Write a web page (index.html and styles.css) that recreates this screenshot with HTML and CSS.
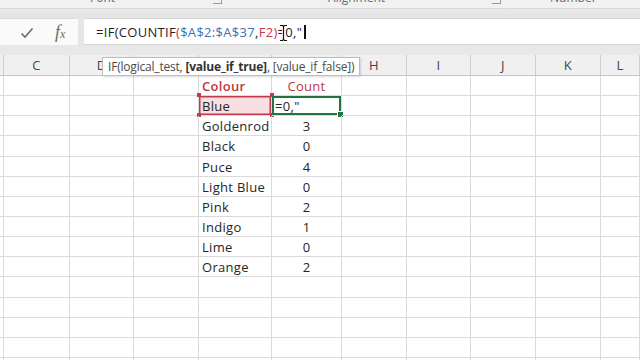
FILE: index.html
```html
<!DOCTYPE html>
<html lang="en">
  <head>
    <meta charset="UTF-8" />
    <title>Colour counts</title>
    <link rel="stylesheet" href="styles.css">
  </head>
  <body>
    <!-- bottom edge of the ribbon, group labels cut off -->
    <div class="ribbon">
      <span class="group-label label-font">Font</span>
      <span class="launcher launcher-font"></span>
      <span class="group-label label-align">Alignment</span>
      <span class="launcher launcher-align"></span>
      <span class="group-label label-number">Number</span>
    </div>
    <div class="band"></div>

    <div class="formula-row">
      <div class="formula-tools">
        <svg class="tick" width="14" height="12" viewBox="0 0 14 12">
          <polyline points="1.5,6.5 5,10 12.5,1.5" fill="none" stroke="#6b6b6b" stroke-width="1.6" />
        </svg>
        <span class="fx">f<small>x</small></span>
      </div>
      <div class="formula-input">
        <span>=IF(COUNTIF</span><span class="ref-red">(</span><span class="ref-blue">$A$2:$A$37</span><span>,</span><span class="ref-red">F2)</span><span>=0,"</span><span class="caret"></span>
        <svg class="ibeam" width="9" height="18" viewBox="0 0 9 18">
          <path d="M1 1.5h2.5l1 1 1-1H8M4.5 2.5v13M1 16.5h2.5l1-1 1 1H8" fill="none" stroke="#fff" stroke-width="3" />
          <path d="M1 1.5h2.5l1 1 1-1H8M4.5 2.5v13M1 16.5h2.5l1-1 1 1H8" fill="none" stroke="#111" stroke-width="1.2" />
        </svg>
      </div>
    </div>
    <div class="gap"></div>

    <div class="sheet">
      <!-- column headers -->
      <div class="hd"></div><div class="hd">C</div><div class="hd">D</div><div class="hd">E</div><div class="hd">F</div><div class="hd">G</div><div class="hd">H</div><div class="hd">I</div><div class="hd">J</div><div class="hd">K</div><div class="hd">L</div>
      <!-- row 1 -->
      <div></div><div></div><div></div><div></div><div class="title colour-title">Colour</div><div class="title num">Count</div><div></div><div></div><div></div><div></div><div></div>
      <!-- row 2 -->
      <div></div><div></div><div></div><div></div>
      <div class="range-ref">Blue<i class="h tl"></i><i class="h tr"></i><i class="h bl"></i><i class="h br"></i></div>
      <div class="active">=0,"<i class="fill-handle"></i></div>
      <div></div><div></div><div></div><div></div><div></div>
      <!-- row 3 -->
      <div></div><div></div><div></div><div></div><div>Goldenrod</div><div class="num">3</div><div></div><div></div><div></div><div></div><div></div>
      <div></div><div></div><div></div><div></div><div>Black</div><div class="num">0</div><div></div><div></div><div></div><div></div><div></div>
      <div></div><div></div><div></div><div></div><div>Puce</div><div class="num">4</div><div></div><div></div><div></div><div></div><div></div>
      <div></div><div></div><div></div><div></div><div>Light Blue</div><div class="num">0</div><div></div><div></div><div></div><div></div><div></div>
      <div></div><div></div><div></div><div></div><div>Pink</div><div class="num">2</div><div></div><div></div><div></div><div></div><div></div>
      <div></div><div></div><div></div><div></div><div>Indigo</div><div class="num">1</div><div></div><div></div><div></div><div></div><div></div>
      <div></div><div></div><div></div><div></div><div>Lime</div><div class="num">0</div><div></div><div></div><div></div><div></div><div></div>
      <div></div><div></div><div></div><div></div><div>Orange</div><div class="num">2</div><div></div><div></div><div></div><div></div><div></div>
      <!-- empty rows -->
      <div></div><div></div><div></div><div></div><div></div><div></div><div></div><div></div><div></div><div></div><div></div>
      <div></div><div></div><div></div><div></div><div></div><div></div><div></div><div></div><div></div><div></div><div></div>
      <div></div><div></div><div></div><div></div><div></div><div></div><div></div><div></div><div></div><div></div><div></div>
      <div></div><div></div><div></div><div></div><div></div><div></div><div></div><div></div><div></div><div></div><div></div>
      <div></div><div></div><div></div><div></div><div></div><div></div><div></div><div></div><div></div><div></div><div></div>
    </div>

    <!-- function argument tooltip -->
    <div class="tooltip">IF(logical_test, <b>[value_if_true]</b>, [value_if_false])</div>
  </body>
</html>
```

FILE: styles.css
```css
body {
  margin: 0;
  width: 640px;
  height: 360px;
  overflow: hidden;
  position: relative;
  background: #fff;
  font-family: "Open Sans", "Noto Sans", sans-serif;
  color: #262626;
}

/* ribbon remains */
.ribbon {
  height: 8px;
  background: #f1f1f1;
  border-bottom: 1px solid #d9d9d9;
  overflow: hidden;
  display: flex;
  align-items: flex-start;
}
.group-label {
  font-size: 12px;
  line-height: 12px;
  margin-top: -8px;
  color: #6a6a6a;
}
.label-font { margin-left: 90px; }
.label-align { margin-left: 106px; }
.label-number { margin-left: 49px; }
.launcher {
  width: 8px;
  height: 5px;
  border-right: 1px solid #9a9a9a;
  border-bottom: 1px solid #9a9a9a;
  margin-top: -2px;
}
.launcher-font { margin-left: 98px; }
.launcher-align { margin-left: 107px; }

.band {
  height: 9px;
  background: linear-gradient(#e9e9e9, #e4e4e4);
}

/* formula bar */
.formula-row {
  height: 27px;
  display: flex;
  background: #e6e6e6;
}
.formula-tools {
  width: 78px;
  background: #fafafa;
  border-top: 1px solid #dcdcdc;
  display: flex;
  align-items: center;
  padding-left: 20px;
  box-sizing: border-box;
}
.tick { margin-top: 1px; }
.fx {
  margin-left: 21px;
  font-family: "Liberation Serif", serif;
  font-style: italic;
  font-size: 18px;
  color: #6b6b6b;
}
.fx small { font-size: 12px; }
.formula-input {
  flex: 1;
  margin-left: 6px;
  background: #fff;
  border-top: 1px solid #d4d4d4;
  border-bottom: 1px solid #d4d4d4;
  display: flex;
  align-items: center;
  padding-left: 12px;
  font-size: 13px;
  letter-spacing: 0.3px;
  color: #1e1e1e;
  position: relative;
}
.ref-blue { color: #3f6fb5; }
.ref-red { color: #c03c48; }
.caret {
  width: 2px;
  height: 14px;
  background: #111;
  margin-left: 2px;
}
.ibeam {
  position: absolute;
  left: 195px;
  top: 5px;
}

.gap {
  height: 10px;
  background: #e8e8e8;
}

/* cell grid */
.sheet {
  display: grid;
  grid-template-columns: 4px 66px 64px 65px 73px 70px 65px 64px 65px 65px 1fr;
  grid-template-rows: 21px;
  grid-auto-rows: 20.15px;
  font-size: 13px;
  letter-spacing: 0.3px;
}
.sheet > div {
  border-right: 1px solid #dadada;
  border-bottom: 1px solid #dadada;
  padding-left: 3px;
  padding-top: 1px;
  line-height: 19px;
  white-space: nowrap;
  position: relative;
}
.sheet > .hd {
  background: #f0f0f0;
  border-right-color: #cfcfcf;
  border-bottom-color: #c4c4c4;
  padding: 0;
  text-align: center;
  color: #444;
  line-height: 20px;
}
.title { color: #c0363f; }
.colour-title { font-weight: 600; }
.sheet > .num {
  text-align: center;
  padding-left: 0;
}

/* F2 referenced by the formula */
.sheet > .range-ref {
  background: #f7dfe2;
  box-shadow: inset 0 0 0 1.5px #c23a4d;
}
.h {
  position: absolute;
  width: 4px;
  height: 4px;
  background: #c23a4d;
}
.tl { left: -2px; top: -3px; }
.tr { right: -3px; top: -3px; }
.bl { left: -2px; bottom: -2px; }
.br { right: -3px; bottom: -2px; }

/* G2 being edited */
.sheet > .active {
  box-shadow: inset 0 0 0 2px #217346;
}
.fill-handle {
  position: absolute;
  right: -3px;
  bottom: -3px;
  width: 5px;
  height: 5px;
  background: #217346;
  border: 1px solid #fff;
}

.tooltip {
  position: absolute;
  left: 102px;
  top: 57px;
  height: 17px;
  padding: 0 5px;
  background: #fff;
  border: 1px solid #bdbdbd;
  box-shadow: 1px 1px 2px rgba(0, 0, 0, 0.15);
  font-size: 12px;
  letter-spacing: -0.2px;
  line-height: 17px;
  color: #4a4a4a;
  white-space: nowrap;
}
.tooltip b { color: #333; }
```
